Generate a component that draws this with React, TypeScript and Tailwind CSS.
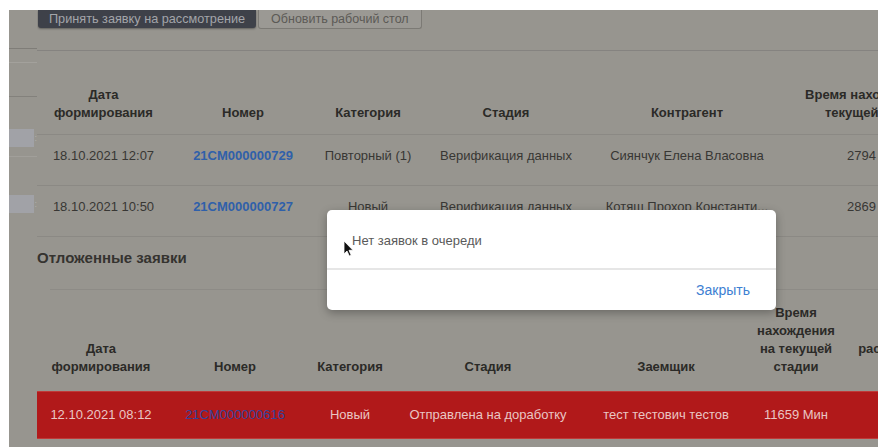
import React from 'react';

type Row = {
  date: string;
  number: string;
  category: string;
  stage: string;
  person: string;
  time: string;
};

const queueRows: Row[] = [
  {
    date: '18.10.2021 12:07',
    number: '21CM000000729',
    category: 'Повторный (1)',
    stage: 'Верификация данных',
    person: 'Сиянчук Елена Власовна',
    time: '2794 Мин',
  },
  {
    date: '18.10.2021 10:50',
    number: '21CM000000727',
    category: 'Новый',
    stage: 'Верификация данных',
    person: 'Котяш Прохор Константи...',
    time: '2869 Мин',
  },
];

const postponedRows: Row[] = [
  {
    date: '12.10.2021 08:12',
    number: '21CM000000616',
    category: 'Новый',
    stage: 'Отправлена на доработку',
    person: 'тест тестович тестов',
    time: '11659 Мин',
  },
];

const th = 'px-1 align-bottom text-center font-bold text-[13px] leading-[18px] text-[#2b2a27] whitespace-nowrap';
const td = 'px-1 text-center text-[13px] leading-[18px] whitespace-nowrap overflow-hidden';

const Sidebar = () => (
  <aside className="w-[28px] shrink-0 flex flex-col">
    <div className="h-[39px] border-b border-[#7f7d78]" />
    <div className="h-[14px] border-b border-[#a3a19c]" />
    <div className="h-[34px] border-b border-[#83817c]" />
    <div className="mt-[32px] flex items-center">
      <div className="w-[26px] h-[18px] bg-[#a1a2a7]" />
      <span className="text-[9px] leading-none text-[#b0afaa]">:</span>
    </div>
    <div className="mt-[9px] border-b border-[#a19f9a]" />
    <div className="mt-[38px] flex items-center">
      <div className="w-[26px] h-[18px] bg-[#a1a2a7]" />
      <span className="text-[9px] leading-none text-[#b0afaa]">:</span>
    </div>
  </aside>
);

const QueueTable = () => (
  <table className="table-fixed border-collapse w-[933px]">
    <colgroup>
      <col className="w-[133px]" />
      <col className="w-[146px]" />
      <col className="w-[104px]" />
      <col className="w-[172px]" />
      <col className="w-[190px]" />
      <col className="w-[188px]" />
    </colgroup>
    <thead>
      <tr className="border-b border-[#8b8984]">
        <th className={`${th} pt-[35px] pb-[12px]`}>
          Дата
          <br />
          формирования
        </th>
        <th className={`${th} pb-[12px]`}>Номер</th>
        <th className={`${th} pb-[12px]`}>Категория</th>
        <th className={`${th} pb-[12px]`}>Стадия</th>
        <th className={`${th} pb-[12px]`}>Контрагент</th>
        <th className={`${th} pb-[12px]`}>
          Время нахождения на
          <br />
          текущей стадии
        </th>
      </tr>
    </thead>
    <tbody>
      {queueRows.map((r) => (
        <tr key={r.number} className="h-[51px] border-b border-[#8b8984] text-[#383734] align-top">
          <td className={`${td} pt-[12px]`}>{r.date}</td>
          <td className={`${td} pt-[12px] font-bold text-[#2f60aa]`}>{r.number}</td>
          <td className={`${td} pt-[12px]`}>{r.category}</td>
          <td className={`${td} pt-[12px]`}>{r.stage}</td>
          <td className={`${td} pt-[12px]`}>{r.person}</td>
          <td className={`${td} pt-[12px]`}>{r.time}</td>
        </tr>
      ))}
    </tbody>
  </table>
);

const PostponedTable = () => (
  <table className="table-fixed border-collapse w-[930px]">
    <colgroup>
      <col className="w-[128px]" />
      <col className="w-[140px]" />
      <col className="w-[90px]" />
      <col className="w-[186px]" />
      <col className="w-[170px]" />
      <col className="w-[90px]" />
      <col className="w-[126px]" />
    </colgroup>
    <thead>
      <tr>
        <th className={`${th} pb-[15px]`}>
          Дата
          <br />
          формирования
        </th>
        <th className={`${th} pb-[15px]`}>Номер</th>
        <th className={`${th} pb-[15px]`}>Категория</th>
        <th className={`${th} pb-[15px]`}>Стадия</th>
        <th className={`${th} pb-[15px]`}>Заемщик</th>
        <th className={`${th} pt-[14px] pb-[15px]`}>
          Время
          <br />
          нахождения
          <br />
          на текущей
          <br />
          стадии
        </th>
        <th className={`${th} pb-[15px]`}>
          Дата
          <br />
          рассмотрения
          <br />
          заявки
        </th>
      </tr>
    </thead>
    <tbody>
      {postponedRows.map((r) => (
        <tr
          key={r.number}
          className="h-[47px] bg-[#b1191a] border-y border-[#c03a38] text-[#e9c6c4]"
        >
          <td className={td}>{r.date}</td>
          <td className={`${td} text-[#34439c]`}>{r.number}</td>
          <td className={td}>{r.category}</td>
          <td className={td}>{r.stage}</td>
          <td className={td}>{r.person}</td>
          <td className={td}>{r.time}</td>
          <td className={td} />
        </tr>
      ))}
    </tbody>
  </table>
);

const Cursor = () => (
  <svg
    className="absolute left-[343px] top-[240px]"
    width="11"
    height="17"
    viewBox="0 0 11 17"
  >
    <path
      d="M1 1 L1 14 L4 11 L6.3 16 L8.2 15.2 L6 10.3 L10 10.3 Z"
      fill="#111"
      stroke="#fff"
      strokeWidth="0.8"
      strokeLinejoin="round"
    />
  </svg>
);

export default function App() {
  return (
    <div className="relative w-[878px] h-[447px] overflow-hidden bg-white pt-[10px] pl-[9px] font-['Liberation_Sans',Arial,sans-serif]">
      <div className="h-full flex bg-[#97958f]">
        <Sidebar />
        <main className="flex-1 min-w-0 overflow-hidden">
          <div className="flex h-[19px] pl-px">
            <button className="h-[18px] px-[11px] rounded-b-[3px] bg-[#3e4149] text-[12.7px] leading-[18px] text-[#a3a5aa] shadow-[0_1px_2px_rgba(0,0,0,0.35)] whitespace-nowrap">
              Принять заявку на рассмотрение
            </button>
            <button className="ml-[2px] h-[19px] px-[12px] rounded-b-[3px] bg-[#9b9994] border border-t-0 border-[#7c7a75] text-[12.5px] leading-[18px] text-[#5b5a56] whitespace-nowrap">
              Обновить рабочий стол
            </button>
          </div>
          <div className="h-[22px] border-b border-[#858380]" />

          <QueueTable />

          <h2 className="mt-[11px] text-[15px] leading-[20px] font-bold text-[#35332f]">
            Отложенные заявки
          </h2>
          <div className="mt-[21px] ml-[13px] border-t border-[#8d8b86]" />

          <PostponedTable />
        </main>
      </div>

      <div className="absolute left-[327px] top-[210px] w-[449px] rounded-[5px] bg-white shadow-[0_3px_10px_rgba(0,0,0,0.3)]">
        <div className="h-[60px] px-[25px] pt-[22px] border-b-2 border-[#e6e6e6] text-[13px] leading-[18px] text-[#5a5a5a]">
          Нет заявок в очереди
        </div>
        <div className="h-[40px] px-[26px] flex items-center justify-end">
          <button className="text-[14px] leading-[18px] text-[#3d80d2]">Закрыть</button>
        </div>
      </div>

      <Cursor />
    </div>
  );
}
